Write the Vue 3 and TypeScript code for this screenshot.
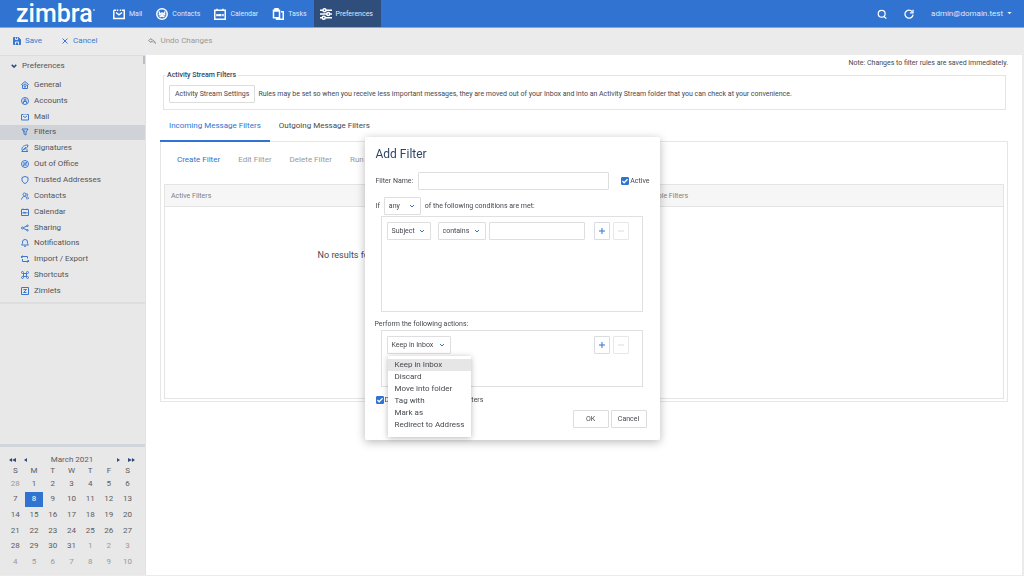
<script setup lang="ts">
import { ref } from 'vue'

interface NavItem { label: string; icon: string }

const icons: Record<string, string> = {
  mail: 'M1 3h3M12 3h3v11H1V3M5 3h2M9 3h2M4 6l4 3 4-3',
  contacts: 'M8 1a7 7 0 1 0 0 14A7 7 0 0 0 8 1M5 5a1 1 0 1 0 1 2M11 5a1 1 0 1 1-1 2M8 6.500a1.500 1.500 0 1 0 0 3 1.500 1.500 0 0 0 0-3M5 12q3-3 6 0M3.500 9h2M10.500 9h2',
  calendar: 'M1 3h14v12H1zM4 1v3M12 1v3M4 8v3M4 9.500h3M7 8v3M9 8v3M12 8v3',
  tasks: 'M2 3h8v10H2zM4 1h4v3H4zM12 5h3v10H6v-2',
  prefs: 'M0 3h4M8 3h8M0 8h9M13 8h3M0 13h3M7 13h9M6 1a2 2 0 1 0 0 4 2 2 0 0 0 0-4M11 6a2 2 0 1 0 0 4 2 2 0 0 0 0-4M5 11a2 2 0 1 0 0 4 2 2 0 0 0 0-4',
  general: 'M1 7l7-6 7 6-2 1v7H3V8zM8 6a2 2 0 1 0 0 5 2 2 0 0 0 0-5M8 11v3',
  accounts: 'M8 1a7 7 0 1 0 0 14A7 7 0 0 0 8 1M8 4a2 2 0 1 0 0 4 2 2 0 0 0 0-4M5 13V9h6v4',
  filters: 'M2 2h12l-4 6v6l-4-2V8zM5 4l3 4',
  signatures: 'M2 12C1 5 7 2 14 2 13 8 9 11 4 11M1 15h13M2 14L10 6M10 12h4',
  office: 'M8 1a7 7 0 1 0 0 14A7 7 0 0 0 8 1M6 4v8l-2-2M10 4v8M10 4l2 2M6 8h4',
  shield: 'M8 1l6 2v5c0 3-3 6-6 7-3-1-6-4-6-7V3z',
  people: 'M7 2a3 3 0 1 0 0 6 3 3 0 0 0 0-6M1 15c1-4 3-6 6-6s5 2 5 6M11 3c3 0 3 5 0 5M12 9c2 1 3 3 3 5',
  sharing: 'M13 2a1 1 0 1 0 0 3 1 1 0 0 0 0-3M3 6a2 2 0 1 0 0 4 2 2 0 0 0 0-4M13 11a1 1 0 1 0 0 3 1 1 0 0 0 0-3M5 7l7-3M5 9l7 3',
  bell: 'M1 12h14c-2-2-2-3-2-6a5 5 0 0 0-10 0c0 3 0 4-2 6zM6 14q2 2 4 0',
  transfer: 'M1 6V3h12v4M3 1L1 3l2 2M3 8v5h12v-3M13 11l2 2-2 2',
  shortcuts: 'M5 5h6v6H5zM5 5H3a2 2 0 1 1 2-2zM11 5V3a2 2 0 1 1 2 2zM11 11h2a2 2 0 1 1-2 2zM5 11v2a2 2 0 1 1-2-2z',
  zimlets: 'M1 1h14v14H1zM5 5h6l-6 6h6',
}

const apps: NavItem[] = [
  { label: 'Mail', icon: 'mail' },
  { label: 'Contacts', icon: 'contacts' },
  { label: 'Calendar', icon: 'calendar' },
  { label: 'Tasks', icon: 'tasks' },
  { label: 'Preferences', icon: 'prefs' },
]

const sections: NavItem[] = [
  { label: 'General', icon: 'general' },
  { label: 'Accounts', icon: 'accounts' },
  { label: 'Mail', icon: 'mail' },
  { label: 'Filters', icon: 'filters' },
  { label: 'Signatures', icon: 'signatures' },
  { label: 'Out of Office', icon: 'office' },
  { label: 'Trusted Addresses', icon: 'shield' },
  { label: 'Contacts', icon: 'people' },
  { label: 'Calendar', icon: 'calendar' },
  { label: 'Sharing', icon: 'sharing' },
  { label: 'Notifications', icon: 'bell' },
  { label: 'Import / Export', icon: 'transfer' },
  { label: 'Shortcuts', icon: 'shortcuts' },
  { label: 'Zimlets', icon: 'zimlets' },
]

const weekdays = ['S', 'M', 'T', 'W', 'T', 'F', 'S']
const firstDay = new Date(2021, 1, 28)
const weeks = Array.from({ length: 6 }, (_, w) =>
  Array.from({ length: 7 }, (_, d) => {
    const date = new Date(firstDay.getFullYear(), firstDay.getMonth(), firstDay.getDate() + w * 7 + d)
    const inMonth = date.getMonth() === 2
    return { day: date.getDate(), other: !inMonth, today: inMonth && date.getDate() === 8 }
  }),
)

const actions = ['Keep in Inbox', 'Discard', 'Move into folder', 'Tag with', 'Mark as', 'Redirect to Address']
const section = ref('Filters')
const action = ref('Keep in Inbox')
const menuOpen = ref(true)
const filterName = ref('')
const matchValue = ref('')
const active = ref(true)
const stop = ref(true)

function pick(name: string) {
  action.value = name
  menuOpen.value = false
}
</script>

<template>
  <div class="page">
    <header class="top">
      <div class="logo">zimbra<span class="dot"></span></div>
      <nav class="apps">
        <a v-for="a in apps" :key="a.label" href="#" class="app" :class="{ current: a.label === 'Preferences' }">
          <svg class="app-icon" viewBox="0 0 16 16"><path :d="icons[a.icon]" /></svg>{{ a.label }}
        </a>
      </nav>
      <div class="account">
        <button class="plain" aria-label="Search">
          <svg class="tool" viewBox="0 0 16 16"><circle cx="7.500" cy="7.500" r="5.500" /><path d="M11 12l4 3" /></svg>
        </button>
        <button class="plain" aria-label="Refresh">
          <svg class="tool" viewBox="0 0 16 16"><path d="M13 4a6.500 6.500 0 1 0 1.500 5M14.500 1v5h-5" /></svg>
        </button>
        <button class="plain user">admin@domain.test <svg class="caret" viewBox="0 0 6 4"><path d="M0 0h6L3 3z" /></svg></button>
      </div>
    </header>

    <div class="toolbar">
      <button class="plain save">
        <svg class="cmd" viewBox="0 0 16 16"><path class="solid" d="M1 1h10l4 4v10H1z" /><path class="cut" d="M5 1v4h4V1M5 15v-5h6v5" /></svg>Save
      </button>
      <button class="plain cancel">
        <svg class="cmd" viewBox="0 0 16 16"><path d="M3 3l10 10M13 3L3 13" /></svg>Cancel
      </button>
      <button class="plain undo">
        <svg class="cmd" viewBox="0 0 16 16"><path d="M6 3L1 7l5 4V9c4 0 6 1 9 4-1-5-4-7-9-8z" /></svg>Undo Changes
      </button>
    </div>

    <div class="body">
      <aside class="side">
        <div class="tree">
          <button class="plain root"><svg class="chev" viewBox="0 0 8 5"><path d="M1 1l3 3 3-3" /></svg>Preferences</button>
          <ul class="sections">
            <li v-for="s in sections" :key="s.label" :class="{ on: s.label === section }">
              <a href="#" @click.prevent="section = s.label">
                <svg class="side-icon" viewBox="0 0 16 16"><path :d="icons[s.icon]" /></svg>{{ s.label }}
              </a>
            </li>
          </ul>
        </div>
        <div class="cal">
          <div class="cal-head">
            <button class="plain" aria-label="Previous year"><svg class="arrow wide" viewBox="0 0 7 4"><path d="M3 0v4L0 2zM7 0v4L3 2z" /></svg></button>
            <button class="plain" aria-label="Previous month"><svg class="arrow" viewBox="0 0 4 4"><path d="M3 0v4L0 2z" /></svg></button>
            <span class="month">March 2021</span>
            <button class="plain" aria-label="Next month"><svg class="arrow" viewBox="0 0 4 4"><path d="M1 0v4l3-2z" /></svg></button>
            <button class="plain" aria-label="Next year"><svg class="arrow wide" viewBox="0 0 7 4"><path d="M0 0v4l4-2zM4 0v4l3-2z" /></svg></button>
          </div>
          <table class="days">
            <thead><tr><th v-for="(d, i) in weekdays" :key="i">{{ d }}</th></tr></thead>
            <tbody>
              <tr v-for="(w, i) in weeks" :key="i">
                <td v-for="(d, j) in w" :key="j" :class="{ other: d.other, today: d.today }">{{ d.day }}</td>
              </tr>
            </tbody>
          </table>
        </div>
      </aside>
      <div class="sash"><i></i></div>

      <main class="main">
        <p class="note">Note: Changes to filter rules are saved immediately.</p>
        <fieldset class="stream">
          <legend>Activity Stream Filters</legend>
          <button class="btn">Activity Stream Settings</button>
          <span>Rules may be set so when you receive less important messages, they are moved out of your Inbox and into an Activity Stream folder that you can check at your convenience.</span>
        </fieldset>
        <div class="tabs">
          <button class="plain tab chosen">Incoming Message Filters</button>
          <button class="plain tab">Outgoing Message Filters</button>
        </div>
        <section class="panel">
          <div class="ops">
            <button class="plain op ready">Create Filter</button>
            <button class="plain op">Edit Filter</button>
            <button class="plain op">Delete Filter</button>
            <button class="plain op">Run Filter</button>
          </div>
          <div class="lists">
            <div class="list">
              <div class="list-head">Active Filters</div>
              <p class="empty">No results found.</p>
            </div>
            <div class="list">
              <div class="list-head">Available Filters</div>
            </div>
          </div>
        </section>
      </main>
    </div>

    <div class="layer">
      <form class="dialog" role="dialog" aria-labelledby="dialog-title" @submit.prevent>
        <h2 id="dialog-title">Add Filter</h2>
        <div class="row name-row">
          <label for="filter-name">Filter Name:</label>
          <input id="filter-name" v-model="filterName" class="box name" type="text" />
          <label class="check"><input v-model="active" type="checkbox" />Active</label>
        </div>
        <div class="row if-row">
          <label for="match">If</label>
          <select id="match" class="box any"><option>any</option><option>all</option></select>
          <span>of the following conditions are met:</span>
        </div>
        <div class="group conditions">
          <select class="box subject" aria-label="Field"><option>Subject</option></select>
          <select class="box contains" aria-label="Comparison"><option>contains</option></select>
          <input v-model="matchValue" class="box value" type="text" aria-label="Value" />
          <button class="sq" type="button" aria-label="Add condition"><svg viewBox="0 0 8 8"><path d="M4 1v6M1 4h6" /></svg></button>
          <button class="sq" type="button" aria-label="Remove condition" disabled><svg viewBox="0 0 8 8"><path d="M1 4h6" /></svg></button>
        </div>
        <p class="perform">Perform the following actions:</p>
        <div class="group acts">
          <div class="picker">
            <select v-model="action" class="box keep" aria-label="Action" @mousedown.prevent="menuOpen = !menuOpen">
              <option v-for="a in actions" :key="a">{{ a }}</option>
            </select>
            <ul v-if="menuOpen" class="menu">
              <li v-for="a in actions" :key="a">
                <button type="button" :class="{ hot: a === action }" @click="pick(a)">{{ a }}</button>
              </li>
            </ul>
          </div>
          <button class="sq" type="button" aria-label="Add action"><svg viewBox="0 0 8 8"><path d="M4 1v6M1 4h6" /></svg></button>
          <button class="sq" type="button" aria-label="Remove action" disabled><svg viewBox="0 0 8 8"><path d="M1 4h6" /></svg></button>
        </div>
        <label class="check stop"><input v-model="stop" type="checkbox" />Do not process additional filters</label>
        <div class="buttons">
          <button class="btn" type="submit">OK</button>
          <button class="btn" type="button">Cancel</button>
        </div>
      </form>
    </div>
  </div>
</template>

<style>
html, body, #app { height: 100%; }
body { margin: 0; overflow: hidden; }
</style>

<style scoped>
button, input, select { font: inherit; color: inherit; margin: 0; }
h2, p, ul { margin: 0; padding: 0; list-style: none; font-weight: 400; }
a { color: inherit; text-decoration: none; }
svg { fill: none; stroke: currentColor; stroke-width: 1; flex: none; display: block; }
.page { height: 100%; display: flex; flex-direction: column; background: #ebebeb; color: #45494f; font: 7px/10px Roboto, "Liberation Sans", sans-serif; }
.page * { box-sizing: border-box; }
.plain { border: 0; background: none; padding: 0; display: flex; align-items: center; }

.top { height: 28px; flex: none; display: flex; background: #3073d1; border-bottom: 1px solid #82a7dc; color: #dfeafa; }
.logo { width: 106px; padding-left: 16px; font-size: 25px; font-weight: 500; line-height: 28px; color: #fff; display: flex; }
.dot { width: 2px; height: 2px; margin-top: 9px; border-radius: 1px; background: #a9c7f0; }
.apps { display: flex; }
.app { display: flex; align-items: center; gap: 4px; padding: 0 7px; }
.app.current { background: #2f4e7c; padding: 0 8px 0 6px; }
.app-icon { width: 12px; height: 12px; stroke-width: 2; color: #fff; }
.account { margin-left: auto; display: flex; align-items: center; padding-right: 12px; gap: 17px; }
.tool { width: 10px; height: 10px; stroke-width: 2; color: #fff; }
.user { gap: 4px; font-size: 8px; }
.caret { width: 5px; height: 3px; fill: currentColor; stroke: none; }

.toolbar { height: 27px; flex: none; display: flex; align-items: center; padding: 0 0 1px 13px; font-size: 8px; color: #3c78cd; }
.cmd { width: 8px; height: 8px; stroke-width: 2; margin-right: 4px; }
.solid { fill: currentColor; }
.cut { stroke: #ebebeb; }
.cancel { margin-left: 19px; }
.undo { margin-left: 51px; color: #999; }

.body { flex: 1; min-height: 0; display: flex; padding: 0 2px 1px 0; }
.side { width: 145px; display: flex; flex-direction: column; justify-content: space-between; background: #e8e8e8; border-top: 1px solid #dcdcdc; font-size: 8px; color: #505459; }
.tree { border-bottom: 2px solid #dedede; padding: 3px 0; }
.root { padding-left: 11px; gap: 5px; height: 14px; }
.chev { width: 6px; height: 4px; color: #2f4e7c; stroke-width: 2; }
.sections { display: grid; grid-template-rows: repeat(14, 1fr); height: 222px; margin-top: 4px; }
.sections li { display: flex; }
.sections li.on { background: #cfd2d6; }
.sections a { flex: 1; display: flex; align-items: center; gap: 5px; padding-left: 21px; }
.side-icon { width: 8px; height: 8px; color: #3c78cd; stroke-width: 2; }
.cal { border-top: 3px solid #d2d6db; padding: 7px 8px 5px 6px; }
.cal-head { display: flex; align-items: center; height: 12px; padding: 0 2px 0 3px; color: #2f4e7c; }
.cal-head .plain + .plain { margin-left: 8px; }
.arrow { width: 4px; height: 4px; fill: currentColor; stroke: none; }
.arrow.wide { width: 7px; }
.month { flex: 1; text-align: center; color: #5c5c5c; }
.days { width: 100%; height: 104px; table-layout: fixed; border-collapse: collapse; text-align: center; color: #5c5c5c; line-height: 10px; }
.days th, .days td { padding: 0; font-weight: 400; }
.days thead { height: 10px; }
.days .other { color: #999; }
.days .today { background: #3073d1; color: #fff; }
.sash { width: 1px; background: #dfe2e6; position: relative; }
.sash i { position: absolute; top: 1px; left: -2px; width: 2px; height: 8px; background: #b8bdc4; }

.main { flex: 1; min-width: 0; background: #fff; padding: 3px 14px 0; }
.note { text-align: right; }
.stream { border: 1px solid #e4e4e4; margin: 2px 2px 0 3px; padding: 5px 5px 6px; display: flex; align-items: center; gap: 3px; min-width: 0; }
.stream legend { padding: 0 2px; margin-left: -4px; font-weight: 500; color: #33475f; }
.btn { border: 1px solid #dcdcdc; border-radius: 1px; background: #fff; height: 18px; padding: 0 5px; white-space: nowrap; }
.tabs { display: flex; height: 32px; font-size: 8px; }
.tab { padding: 2px 9px 0; border-bottom: 2px solid transparent; }
.tab.chosen { color: #3073d1; border-color: #3073d1; }
.panel { border: 1px solid #e6e6e6; padding: 0 3px 2px; height: 261px; display: flex; flex-direction: column; margin-top: -1px; }
.ops { display: flex; align-items: flex-start; gap: 18px; height: 42px; flex: none; padding: 12px 13px 0; font-size: 8px; color: #999; }
.op { height: 12px; color: #999; }
.op.ready { color: #3073d1; }
.lists { flex: 1; display: grid; grid-template-columns: 1fr 1fr; column-gap: 96px; }
.list { border: 1px solid #e4e4e4; }
.list-head { height: 22px; line-height: 22px; background: #f6f6f6; border-bottom: 1px solid #e4e4e4; padding-left: 6px; color: #808080; }
.empty { text-align: center; padding: 43px 0 0 4px; font-size: 9px; }

.layer { position: fixed; inset: 0; padding-top: 1px; box-sizing: border-box; display: flex; align-items: center; justify-content: center; }
.dialog { width: 295px; background: #fff; border-radius: 2px; box-shadow: 0 2px 10px rgba(0, 0, 0, .28); padding: 9px 10px 12px 11px; }
.dialog h2 { font-size: 12px; line-height: 16px; color: #2f4564; }
.row { display: flex; align-items: center; }
.name-row { margin-top: 10px; gap: 5px; }
.name-row .check { margin-left: auto; }
.if-row { margin-top: 7px; gap: 4px; }
.box { border: 1px solid #dedede; border-radius: 1px; background-color: #fff; height: 18px; padding: 0 4px; outline: 0; }
.name { width: 191px; }
select.box { appearance: none; background: #fff url("data:image/svg+xml,%3Csvg xmlns='http://www.w3.org/2000/svg' viewBox='0 0 6 4'%3E%3Cpath d='M1 1l2 2 2-2' fill='none' stroke='%233073d1'/%3E%3C/svg%3E") no-repeat right 5px center / 6px 4px; }
.any { width: 37px; }
.check { display: flex; align-items: center; }
.check input { appearance: none; width: 8px; height: 8px; margin-right: 1px; border-radius: 1px; border: 1px solid #3073d1; background: #fff; }
.check input:checked { background: #3073d1 url("data:image/svg+xml,%3Csvg xmlns='http://www.w3.org/2000/svg' viewBox='0 0 8 8'%3E%3Cpath d='M1 4l2 2 4-4' fill='none' stroke='white' stroke-width='1.500'/%3E%3C/svg%3E") center / 7px 7px; }
.group { border: 1px solid #e0e0e0; margin: 0 7px 0 5px; padding: 5px; display: flex; align-items: flex-start; }
.conditions { height: 96px; margin-top: 1px; }
.subject { width: 44px; margin-right: 7px; }
.contains { width: 48px; margin-right: 3px; }
.value { width: 96px; margin-right: 9px; }
.sq { width: 16px; height: 18px; border: 1px solid #d8dce1; border-radius: 1px; background: #fff; padding: 0; display: flex; align-items: center; justify-content: center; color: #3073d1; }
.sq svg { width: 8px; height: 8px; }
.sq + .sq { margin-left: 3px; }
.sq:disabled { color: #dcdcdc; border-color: #e8e8e8; }
.perform { margin: 7px 0 0 -1px; }
.acts { height: 57px; margin-top: 1px; }
.picker { position: relative; width: 207px; }
.keep { width: 64px; display: block; }
.menu { position: absolute; top: 20px; left: 1px; width: 83px; background: #fff; padding: 3px 0 6px; box-shadow: 0 1px 6px rgba(0, 0, 0, .28); }
.menu button { display: block; width: 100%; height: 12px; padding: 0 0 0 7px; border: 0; background: none; text-align: left; font-size: 8px; line-height: 12px; white-space: nowrap; }
.menu button.hot { background: #e6e6e6; }
.stop { margin-top: 8px; }
.buttons { display: flex; justify-content: flex-end; gap: 2px; margin: 5px 3px 0 0; }
.buttons .btn { width: 36px; }
</style>
